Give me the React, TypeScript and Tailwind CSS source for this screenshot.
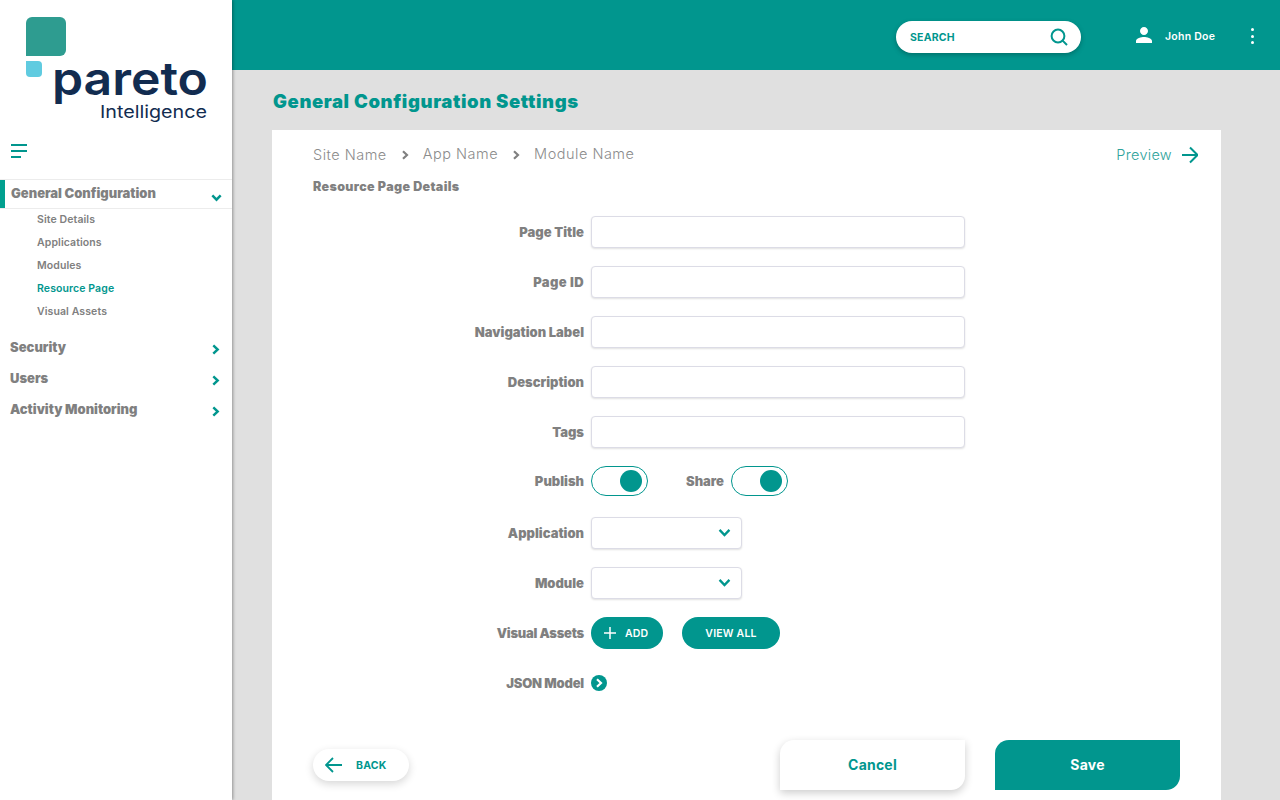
import React from "react";

const Chev = ({ dir = "right", className = "", w = 2.2 }: { dir?: "right" | "down"; className?: string; w?: number }) => (
  <svg viewBox="0 0 10 10" className={className} fill="none" stroke="currentColor" strokeWidth={w}>
    {dir === "right" ? <path d="M3 1.2 L7 5 L3 8.8" /> : <path d="M1.2 3 L5 7 L8.8 3" />}
  </svg>
);

const Label = ({ children, className = "" }: { children: React.ReactNode; className?: string }) => (
  <div className={`text-[13px] font-black text-[#808080] leading-none whitespace-nowrap mt-[2px] ${className}`}>{children}</div>
);

const Row = ({ label, children, className = "", labelClass = "" }: { label: string; children: React.ReactNode; className?: string; labelClass?: string }) => (
  <div className={`flex items-center ${className}`}>
    <div className="w-[271px] flex justify-end mr-[7px]">
      <Label className={labelClass}>{label}</Label>
    </div>
    {children}
  </div>
);

const Input = () => (
  <div className="w-[374px] h-8 rounded-[4px] bg-white border border-[#dcdce6] shadow-[0_1px_2px_rgba(0,0,0,0.12)]" />
);

const Select = () => (
  <div className="w-[151px] h-8 rounded-[4px] bg-white border border-[#dcdce6] shadow-[0_1px_2px_rgba(0,0,0,0.12)] flex items-center justify-end pr-[10px] text-[#01968e]">
    <Chev dir="down" w={1.8} className="w-[13px] h-[13px]" />
  </div>
);

const Toggle = () => (
  <div className="w-[57px] h-[30px] rounded-full border border-[#01968e] bg-white flex items-center justify-end pr-[5px]">
    <div className="w-[22px] h-[22px] rounded-full bg-[#01968e]" />
  </div>
);

const Sub = ({ children, active }: { children: React.ReactNode; active?: boolean }) => (
  <div className={`h-[23px] flex items-center pl-[37px] text-[10.5px] font-semibold tracking-[0.1px] ${active ? "text-[#01968e] font-bold" : "text-[#808080]"}`}>
    {children}
  </div>
);

const Group = ({ children, className = "" }: { children: React.ReactNode; className?: string }) => (
  <div className={`h-[31px] flex items-center justify-between pl-[10px] pr-[11px] ${className}`}>
    <span className="text-[13px] font-black text-[#808080]">{children}</span>
    <Chev className="w-[11px] h-[11px] text-[#01968e] mt-[4px]" />
  </div>
);

export default function App() {
  return (
    <div className="w-[1280px] h-[800px] overflow-hidden flex bg-[#e0e0e0] font-['Inter',sans-serif]">
      <aside className="w-[232px] shrink-0 h-full bg-white shadow-[1px_0_3px_rgba(0,0,0,0.35)] z-10">
        <svg width="232" height="130" viewBox="0 0 232 130" className="block">
          <path d="M32 17 H60 A6 6 0 0 1 66 23 V50 A6 6 0 0 1 60 56 H26 V23 A6 6 0 0 1 32 17 Z" fill="#2e9c90" />
          <path d="M26 61 H38 A4 4 0 0 1 42 65 V73 A4 4 0 0 1 38 77 H30 A4 4 0 0 1 26 73 Z" fill="#60cbe0" />
          <text x="52" y="95" fontFamily="Inter, sans-serif" fontWeight="600" fontSize="46" fill="#122c50" textLength="156" lengthAdjust="spacingAndGlyphs">pareto</text>
          <text x="100" y="118" fontFamily="Inter, sans-serif" fontWeight="400" fontSize="17.5" fill="#122c50" textLength="107" lengthAdjust="spacingAndGlyphs">Intelligence</text>
        </svg>
        <div className="pl-[11px] pt-[14px] flex flex-col gap-1 h-[49px]">
          <div className="w-4 h-[2px] bg-[#01968e]" />
          <div className="w-4 h-[2px] bg-[#01968e]" />
          <div className="w-[10px] h-[2px] bg-[#01968e]" />
        </div>
        <div className="h-[30px] border-y border-[#ececec] flex items-center justify-between pl-[11px] pr-[10px] relative">
          <div className="absolute left-0 top-0 bottom-0 w-[5px] bg-[#01a08f]" />
          <span className="text-[13px] font-black text-[#808080]">General Configuration</span>
          <Chev dir="down" className="w-[11px] h-[11px] text-[#01968e] mt-[7px]" />
        </div>
        <div className="mt-[-1px]">
          <Sub>Site Details</Sub>
          <Sub>Applications</Sub>
          <Sub>Modules</Sub>
          <Sub active>Resource Page</Sub>
          <Sub>Visual Assets</Sub>
        </div>
        <div className="mt-[9px]">
          <Group>Security</Group>
          <Group>Users</Group>
          <Group>Activity Monitoring</Group>
        </div>
      </aside>

      <div className="flex-1 min-w-0 h-full flex flex-col">
        <header className="h-[70px] shrink-0 bg-[#01968e] flex items-start">
          <div className="ml-[664px] mt-[21px] w-[185px] h-8 rounded-full bg-white shadow-[0_2px_5px_rgba(0,0,0,0.25)] flex items-center justify-between pl-[14px] pr-[13px]">
            <span className="text-[10.5px] font-bold text-[#01968e] tracking-[0.2px] mt-[2px]">SEARCH</span>
            <svg width="18" height="18" viewBox="0 0 18 18" fill="none" stroke="#01968e" strokeWidth="2">
              <circle cx="8" cy="8" r="6.4" />
              <path d="M12.6 12.6 L17 17" />
            </svg>
          </div>
          <svg width="24" height="24" viewBox="0 0 24 24" fill="#fff" className="ml-[51px] mt-[23px]">
            <path d="M12 12c2.21 0 4-1.79 4-4s-1.79-4-4-4-4 1.79-4 4 1.79 4 4 4zm0 2c-2.67 0-8 1.34-8 4v2h16v-2c0-2.66-5.33-4-8-4z" />
          </svg>
          <span className="ml-[9px] mt-[30px] text-[10.5px] leading-[14px] font-semibold text-white tracking-[0.25px]">John Doe</span>
          <div className="ml-[36px] mt-[28px] flex flex-col gap-[3.5px]">
            <div className="w-[3px] h-[3px] rounded-full bg-white" />
            <div className="w-[3px] h-[3px] rounded-full bg-white" />
            <div className="w-[3px] h-[3px] rounded-full bg-white" />
          </div>
        </header>

        <main className="flex-1 min-h-0 pl-10 pr-[59px] overflow-hidden">
          <h1 className="h-[60px] flex items-center pl-[1px] pt-[2px] text-[18.5px] font-black text-[#01968e] tracking-[0.6px] leading-none">
            General Configuration Settings
          </h1>
          <section className="bg-white h-[670px] pl-[41px] pr-[23px] pt-[15px] relative">
            <div className="flex items-center justify-between h-[20px]">
              <div className="flex items-center text-[14.5px] text-[#8c8c8c] tracking-[0.5px] font-light">
                <span>Site Name</span>
                <Chev className="w-[10px] h-[10px] text-[#808080] ml-[13px] mr-[13px]" />
                <span className="-mt-[2px]">App Name</span>
                <Chev className="w-[10px] h-[10px] text-[#808080] ml-[13px] mr-[13px]" />
                <span className="-mt-[2px]">Module Name</span>
              </div>
              <div className="flex items-center text-[14.5px] font-light text-[#2fa39c] tracking-[0.3px]">
                <span>Preview</span>
                <svg width="16" height="18" viewBox="0 0 16 18" fill="none" stroke="#01968e" strokeWidth="2" className="ml-[10px]">
                  <path d="M0 9 H15.5 M8 1.5 L15.5 9 L8 16.5" />
                </svg>
              </div>
            </div>
            <div className="mt-[16px] text-[12.5px] leading-none font-black text-[#808080] tracking-[0.35px]">Resource Page Details</div>

            <div className="mt-[22px] flex flex-col">
              <Row label="Page Title" className="mb-[18px]"><Input /></Row>
              <Row label="Page ID" className="mb-[18px]" labelClass="tracking-[0.4px]"><Input /></Row>
              <Row label="Navigation Label" className="mb-[18px]"><Input /></Row>
              <Row label="Description" className="mb-[18px]"><Input /></Row>
              <Row label="Tags" className="mb-[18px]"><Input /></Row>
              <Row label="Publish" className="mb-[21px]">
                <Toggle />
                <div className="w-[76px] mr-[7px] flex justify-end"><Label>Share</Label></div>
                <Toggle />
              </Row>
              <Row label="Application" className="mb-[18px]"><Select /></Row>
              <Row label="Module" className="mb-[18px]"><Select /></Row>
              <Row label="Visual Assets" className="mb-[26px]" labelClass="tracking-[-0.25px]">
                <div className="w-[72px] h-8 rounded-full bg-[#01968e] flex items-center pl-[13px] text-white">
                  <svg width="12" height="12" viewBox="0 0 12 12" stroke="#fff" strokeWidth="1.5"><path d="M6 0 V12 M0 6 H12" /></svg>
                  <span className="ml-[9px] mt-[2px] text-[10.5px] font-semibold tracking-[0.2px]">ADD</span>
                </div>
                <div className="ml-[19px] w-[98px] h-8 rounded-full bg-[#01968e] flex items-center justify-center text-[10.5px] font-semibold text-white tracking-[0.2px] pt-[2px]">
                  VIEW ALL
                </div>
              </Row>
              <Row label="JSON Model" labelClass="tracking-[-0.2px]">
                <div className="w-4 h-4 rounded-full bg-[#01968e] flex items-center justify-center text-white">
                  <Chev className="w-[10px] h-[10px]" />
                </div>
              </Row>
            </div>

            <div className="mt-[49px] flex items-start">
              <div className="mt-[9px] w-24 h-8 rounded-full bg-white shadow-[0_3px_8px_rgba(0,0,0,0.16)] flex items-center pl-[12px]">
                <svg width="17" height="16" viewBox="0 0 17 16" fill="none" stroke="#01968e" strokeWidth="1.8">
                  <path d="M17 8 H1 M8 1 L1 8 L8 15" />
                </svg>
                <span className="ml-[14px] mt-[2px] text-[10.5px] font-bold text-[#01968e] tracking-[0.2px]">BACK</span>
              </div>
              <div className="ml-[371px] w-[185px] h-[50px] bg-white rounded-tl-[14px] rounded-br-[14px] shadow-[0_3px_8px_rgba(0,0,0,0.2)] flex items-center justify-center pb-[1px] text-[14px] font-bold text-[#01968e] tracking-[0.2px]">
                Cancel
              </div>
              <div className="ml-[30px] w-[185px] h-[50px] bg-[#01968e] rounded-tl-[14px] rounded-br-[14px] flex items-center justify-center pb-[1px] text-[14px] font-bold text-white tracking-[0.2px]">
                Save
              </div>
            </div>
          </section>
        </main>
      </div>
    </div>
  );
}
